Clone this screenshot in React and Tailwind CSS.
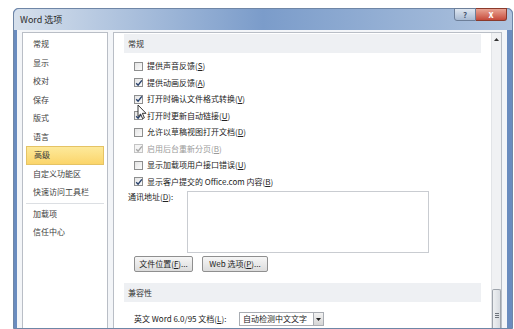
import React from 'react';

// --- Small building blocks ---

const Key = ({ k }) => (
  <span>
    (<span className="underline underline-offset-1">{k}</span>)
  </span>
);

const Checkbox = ({ checked, disabled }) => (
  <span
    className={`relative flex h-[9px] w-[9px] shrink-0 items-center justify-center border ${
      disabled ? 'border-[#c4c4c4] bg-[#f4f4f4]' : 'border-[#8e8f8f] bg-gradient-to-br from-[#e4e4e4] to-[#fbfbfb]'
    }`}
  >
    {checked && (
      <svg width="8" height="8" viewBox="0 0 8 8" className="absolute">
        <path
          d="M1.2 4.2 L3.1 6.2 L6.9 1.4"
          fill="none"
          stroke={disabled ? '#a8a8a8' : '#27406b'}
          strokeWidth="1.4"
        />
      </svg>
    )}
  </span>
);

const CheckRow = ({ label, k, checked, disabled }) => (
  <div className="flex h-[16.5px] items-center gap-[4px] pl-[20px]">
    <Checkbox checked={checked} disabled={disabled} />
    <span className={disabled ? 'text-[#9a9a9a]' : 'text-[#222]'}>
      {label}
      <Key k={k} />
    </span>
  </div>
);

const SectionBand = ({ title }) => (
  <div className="mr-[10px] ml-[10px] flex h-[19px] items-center bg-[#eef0f3] pl-[4px] text-[#333]">{title}</div>
);

const NavItem = ({ label, active }) => (
  <div
    className={`mx-[3px] flex h-[18.5px] items-center pl-[7px] ${
      active
        ? 'border border-[#e5c365] bg-gradient-to-b from-[#fde99a] to-[#fbd56a] text-[#3a3a3a]'
        : 'text-[#3c3c3c]'
    }`}
  >
    {label}
  </div>
);

const Button = ({ children, w }) => (
  <div
    className={`flex h-[16px] ${w} items-center justify-center rounded-[2px] border border-[#8f8f8f] bg-gradient-to-b from-[#f6f6f6] to-[#dcdcdc] text-[#222]`}
  >
    {children}
  </div>
);

const Cursor = () => (
  <svg width="11" height="16" viewBox="0 0 11 16" className="absolute left-[23px] top-[71px]">
    <path d="M1 1 L1 12.5 L3.6 10 L5.6 14.6 L7.4 13.8 L5.4 9.3 L9 9.3 Z" fill="#fff" stroke="#222" strokeWidth="0.9" strokeLinejoin="round" />
  </svg>
);

// --- Main dialog ---

export default function App() {
  const navTop = ['常规', '显示', '校对', '保存', '版式', '语言'];
  const rows = [
    { label: '提供声音反馈', k: 'S' },
    { label: '提供动画反馈', k: 'A', checked: true },
    { label: '打开时确认文件格式转换', k: 'V', checked: true },
    { label: '打开时更新自动链接', k: 'U', checked: true },
    { label: '允许以草稿视图打开文档', k: 'D' },
    { label: '启用后台重新分页', k: 'B', checked: true, disabled: true },
    { label: '显示加载项用户接口错误', k: 'U' },
    { label: '显示客户提交的 Office.com 内容', k: 'B', checked: true },
  ];

  return (
    <div className="h-[329px] w-[514px] overflow-hidden bg-white pt-[8px] pl-[13px] pr-[1px] font-['Noto_Sans_CJK_SC',sans-serif] text-[8px] leading-none">
      <div className="flex h-full flex-col rounded-t-[5px] border border-[#6f86a6] bg-[#6a8cbf]">
        {/* title bar */}
        <div className="relative flex h-[21px] shrink-0 items-center rounded-t-[5px] bg-gradient-to-r from-[#d6e0ec] via-[#7b9cca] to-[#aec3de] pl-[6px]">
          <span className="text-[9px] text-[#2b2b2b]">Word 选项</span>
          <div className="absolute right-[5px] top-[-1px] flex">
            <div className="flex h-[13px] w-[22px] items-center justify-center rounded-bl-[3px] border border-[#6d7f99] bg-gradient-to-b from-[#dfe7f1] to-[#a8bad2] text-[8px] font-bold text-[#4a5a73]">
              ?
            </div>
            <div className="flex h-[13px] w-[31px] items-center justify-center rounded-br-[3px] border border-l-0 border-[#8a3a2c] bg-gradient-to-b from-[#e8a393] to-[#c5493a] text-[9px] font-bold text-white">
              x
            </div>
          </div>
        </div>

        {/* client area */}
        <div className="ml-[3px] mr-[5px] flex min-h-0 flex-1 gap-[5px] bg-[#f3f5f8] pl-[5px] pr-[5px] pt-[2px]">
          {/* navigation */}
          <div className="flex w-[86px] shrink-0 flex-col border border-b-0 border-[#b9bec6] bg-white pt-[2px]">
            {navTop.map((n) => (
              <NavItem key={n} label={n} />
            ))}
            <NavItem label="高级" active />
            <NavItem label="自定义功能区" />
            <NavItem label="快速访问工具栏" />
            <div className="mx-[3px] my-[1px] h-px bg-[#dcdfe3]" />
            <NavItem label="加载项" />
            <NavItem label="信任中心" />
          </div>

          {/* content */}
          <div className="relative flex min-w-0 flex-1 border border-b-0 border-[#b9bec6] bg-white">
            <div className="flex min-w-0 flex-1 flex-col pt-[1px]">
              <SectionBand title="常规" />
              <div className="mt-[5px] flex flex-col">
                {rows.map((r, i) => (
                  <CheckRow key={i} {...r} />
                ))}
              </div>
              <div className="mt-[1px] flex pl-[14px]">
                <span className="mt-[2px] w-[59px] text-[#222]">
                  通讯地址<Key k="D" />:
                </span>
                <div className="h-[62px] w-[242px] border border-[#c9ccd1] bg-white" />
              </div>
              <div className="mt-[3px] flex gap-[9px] pl-[20px]">
                <Button w="w-[59px]">
                  文件位置<Key k="F" />...
                </Button>
                <Button w="w-[66px]">
                  Web 选项<Key k="P" />...
                </Button>
              </div>
              <div className="mt-[11px]">
                <SectionBand title="兼容性" />
              </div>
              <div className="mt-[10px] flex items-center pl-[20px] text-[#222]">
                <span className="w-[105px]">
                  英文 Word 6.0/95 文档<Key k="L" />:
                </span>
                <div className="flex h-[14px] w-[85px] items-center border border-[#a9adb3] bg-white pl-[3px]">
                  <span className="flex-1">自动检测中文文字</span>
                  <span className="flex h-full w-[10px] items-center justify-center border-l border-[#a9adb3] bg-gradient-to-b from-[#f2f2f2] to-[#d6d6d6]">
                    <svg width="5" height="3" viewBox="0 0 5 3">
                      <path d="M0 0 H5 L2.5 3 Z" fill="#222" />
                    </svg>
                  </span>
                </div>
              </div>
            </div>

            {/* scrollbar */}
            <div className="flex w-[10px] shrink-0 flex-col border-l border-[#e2e4e7] bg-[#f0f1f3]">
              <div className="flex h-[12px] items-center justify-center">
                <svg width="5" height="3" viewBox="0 0 5 3">
                  <path d="M0 3 H5 L2.5 0 Z" fill="#333" />
                </svg>
              </div>
              <div className="flex-1" />
              <div className="flex h-[39px] flex-col items-center justify-center gap-[1px] rounded-t-[2px] border border-b-0 border-[#9da3ab] bg-gradient-to-r from-[#eef0f2] to-[#d8dce1] pt-[12px]">
                <div className="h-px w-[4px] bg-[#6d737b]" />
                <div className="h-px w-[4px] bg-[#6d737b]" />
                <div className="h-px w-[4px] bg-[#6d737b]" />
              </div>
            </div>

            <Cursor />
          </div>
        </div>
      </div>
    </div>
  );
}
